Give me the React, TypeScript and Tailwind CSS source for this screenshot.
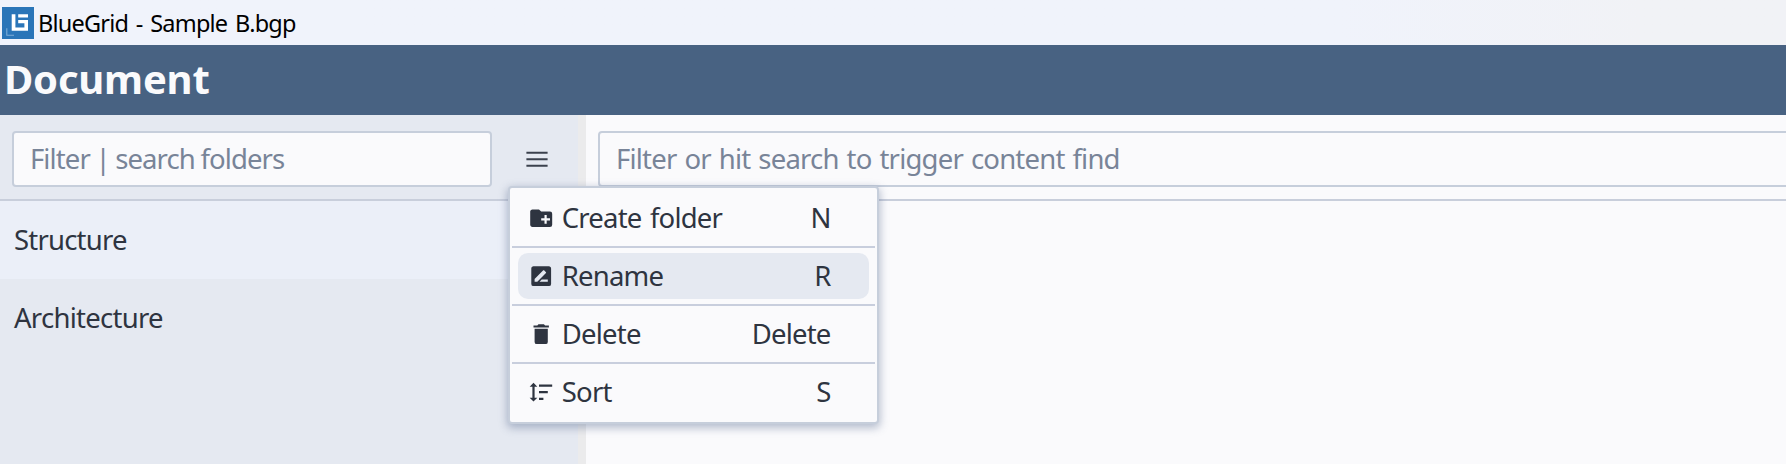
import type { ReactNode } from "react";

const icons: Record<string, ReactNode> = {
  folder: (
    <path d="M10,4L12,6H20A2,2 0 0,1 22,8V18A2,2 0 0,1 20,20H4C2.89,20 2,19.1 2,18V6C2,4.89 2.89,4 4,4H10M15,9V12H12V14H15V17H17V14H20V12H17V9H15Z" />
  ),
  rename: (
    <path d="M18,17H10.5L12.5,15H18M6,17V14.5L13.88,6.65C14.07,6.45 14.39,6.45 14.59,6.65L16.35,8.41C16.55,8.61 16.55,8.92 16.35,9.12L8.47,17M19,3H5C3.89,3 3,3.89 3,5V19A2,2 0 0,0 5,21H19A2,2 0 0,0 21,19V5C21,3.89 20.1,3 19,3Z" />
  ),
  trash: (
    <path d="M19,4H15.5L14.5,3H9.5L8.5,4H5V6H19M6,19A2,2 0 0,0 8,21H16A2,2 0 0,0 18,19V7H6V19Z" />
  ),
  sort: (
    <path d="M10,13V11H18V13H10M10,19V17H14V19H10M10,7V5H22V7H10M6,17H8.5L5,20.5L1.5,17H4V7H1.5L5,3.5L8.5,7H6V17Z" />
  ),
};

const items = [
  { icon: "folder", label: "Create folder", hotkey: "N", active: false },
  { icon: "rename", label: "Rename", hotkey: "R", active: true },
  { icon: "trash", label: "Delete", hotkey: "Delete", active: false },
  { icon: "sort", label: "Sort", hotkey: "S", active: false },
];

function Logo() {
  return (
    <svg className="size-8 shrink-0" viewBox="0 0 32 32">
      <rect width="32" height="32" fill="#2a75b8" />
      <path
        d="M9.7 7.3H13.4V20.5H22.4V16.2H16.2V13H26V23.8H9.7ZM16.2 7.3H26V10.6H16.2Z"
        fill="#fff"
      />
      <path d="M4.8 21.3v6.9H12" fill="none" stroke="#7fadd6" strokeWidth="1.1" />
    </svg>
  );
}

function MenuPopup() {
  return (
    <div className="absolute top-[186px] left-[508px] w-[371px] rounded-[4px] border-2 border-[#c6cedb] bg-[#fafafc] p-0.5 shadow-[0_3px_8px_1px_rgba(76,96,135,0.4)]">
      {items.map((item, i) => (
        <div key={item.label}>
          {i > 0 && <div className="h-0.5 bg-[#c8cedd]" />}
          <div className="h-14 px-1.5 py-[5px]">
            <div
              className={`flex h-[46px] items-center rounded-[10px] pr-[38.5px] pl-[10px] ${item.active ? "bg-[#e5e9f1]" : ""}`}
            >
              <svg className="size-[26.4px] shrink-0 fill-[#2e3440]" viewBox="0 0 24 24">
                {icons[item.icon]}
              </svg>
              <span className="ml-[7.4px] flex-1">{item.label}</span>
              <span>{item.hotkey}</span>
            </div>
          </div>
        </div>
      ))}
    </div>
  );
}

export default function App() {
  return (
    <div className="relative flex h-[464px] w-full flex-col overflow-hidden bg-[#fafafc] font-['Noto_Sans',sans-serif] text-[27.5px] leading-[38px] tracking-[-0.8px] whitespace-nowrap text-[#2e3440] [word-spacing:2px]">
      <div className="flex h-[45px] shrink-0 items-center bg-linear-to-r from-[#f0f3fb] from-75% to-[#f1f2f6] to-92% pl-0.5 text-[23.5px] text-black [word-spacing:2.4px]">
        <Logo />
        <span className="ml-1">BlueGrid - Sample B.bgp</span>
      </div>
      <div className="flex h-[70px] shrink-0 items-center bg-[#486282] pb-0.5 pl-1 text-[40px] font-bold tracking-[-0.2px] text-[#fafafc]">
        <span>Document</span>
      </div>
      <div className="flex min-h-0 flex-1">
        <div className="w-[578px] shrink-0 bg-[#e5e9f1]">
          <div className="flex h-[86px] border-b-2 border-[#c8cedb] pt-4 pl-3">
            <div className="flex h-14 w-[480px] items-center rounded-[4px] border-2 border-[#c6cedb] bg-[#fafafc] pl-4 text-[#788498]">
              <span className="tracking-[-0.9px] [word-spacing:-0.7px]">Filter | search folders</span>
            </div>
            <svg className="mt-[19px] ml-[34px] h-[18px] w-[22px]" viewBox="0 0 22 18">
              <path d="M.4 2.7h21.2M.4 9.2h21.2M.4 15.7h21.2" stroke="#3b414d" strokeWidth="2" />
            </svg>
          </div>
          <div className="flex h-[78px] items-center bg-[#ebeff8] pl-3.5">
            <span>Structure</span>
          </div>
          <div className="flex h-[78px] items-center pl-3.5">
            <span className="tracking-[-0.72px]">Architecture</span>
          </div>
        </div>
        <div className="w-2 shrink-0 bg-[#ebebec]" />
        <div className="min-w-0 flex-1">
          <div className="h-[86px] overflow-hidden border-b-2 border-[#c8cedb] pt-4 pl-3">
            <div className="flex h-14 w-[1200px] items-center rounded-[4px] border-2 border-[#c6cedb] pl-4 text-[#788498]">
              <span className="[word-spacing:1.6px]">Filter or hit search to trigger content find</span>
            </div>
          </div>
        </div>
      </div>
      <MenuPopup />
    </div>
  );
}
